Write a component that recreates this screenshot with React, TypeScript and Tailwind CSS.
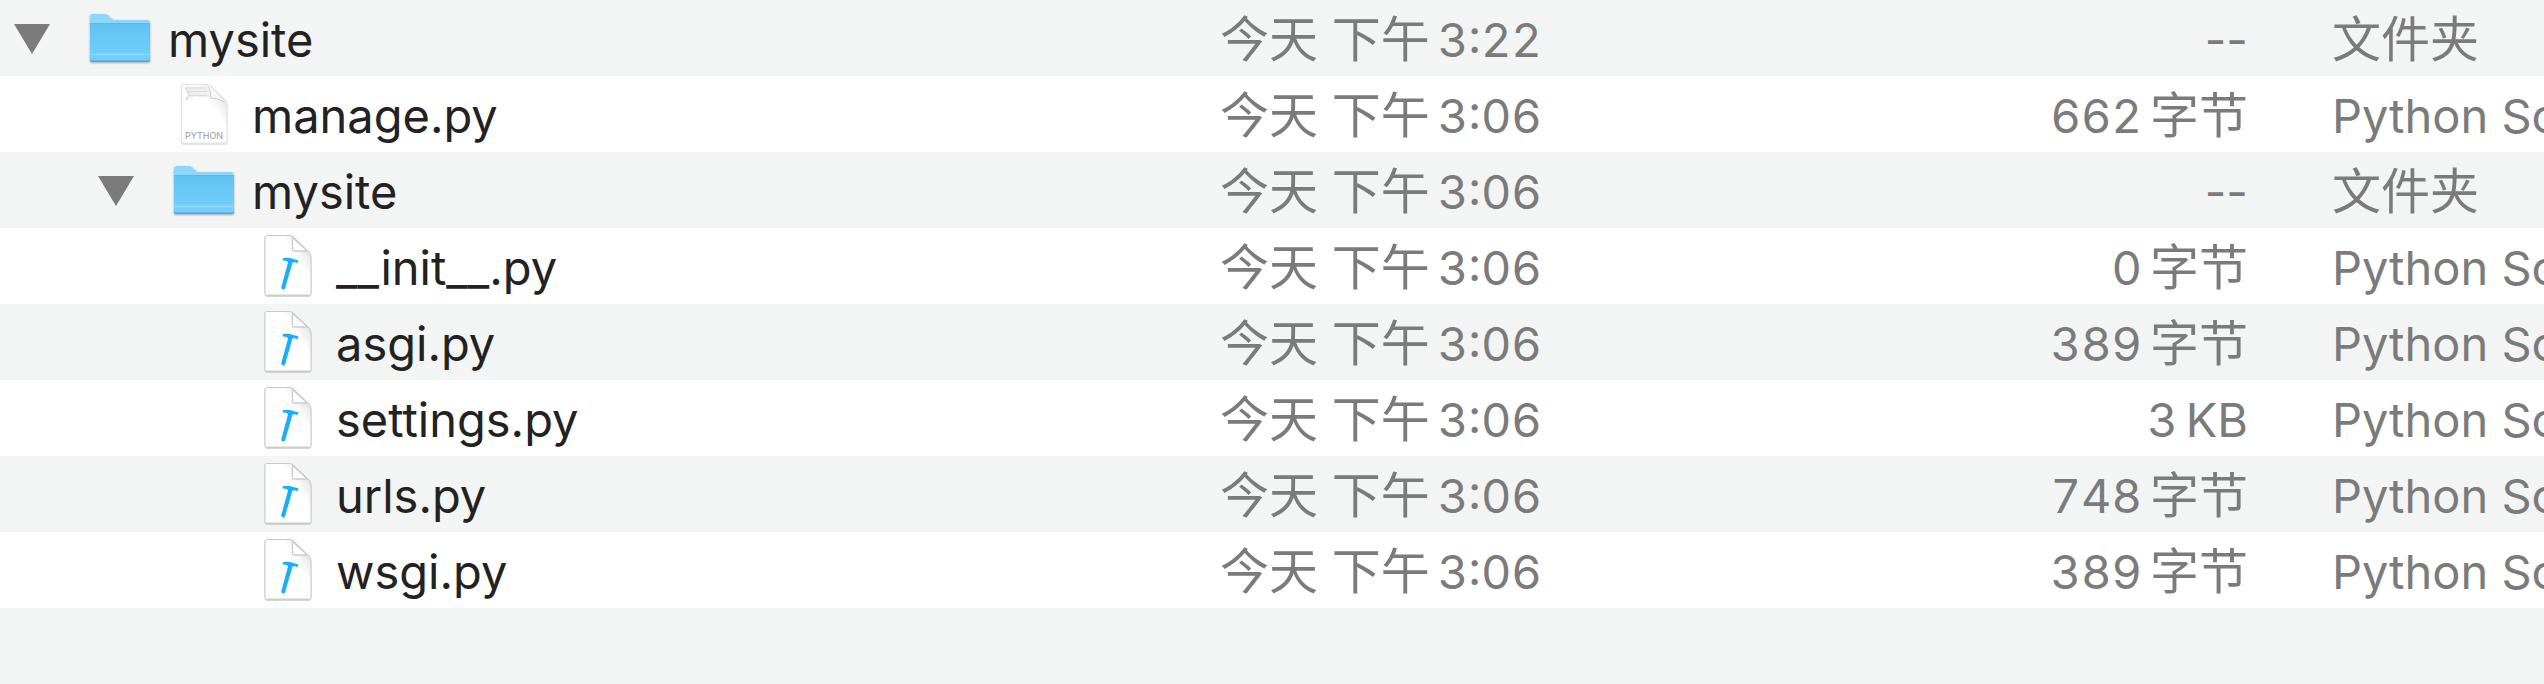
import React from "react";

type Kind = "folder" | "python" | "script";

interface Entry {
  name: string;
  depth: number;
  kind: Kind;
  time: string;
  size?: { value: string; unit: string };
}

const bytes = (value: string) => ({ value, unit: "字节" });

const entries: Entry[] = [
  { name: "mysite", depth: 0, kind: "folder", time: "3:22" },
  { name: "manage.py", depth: 1, kind: "python", time: "3:06", size: bytes("662") },
  { name: "mysite", depth: 1, kind: "folder", time: "3:06" },
  { name: "__init__.py", depth: 2, kind: "script", time: "3:06", size: bytes("0") },
  { name: "asgi.py", depth: 2, kind: "script", time: "3:06", size: bytes("389") },
  { name: "settings.py", depth: 2, kind: "script", time: "3:06", size: { value: "3", unit: "KB" } },
  { name: "urls.py", depth: 2, kind: "script", time: "3:06", size: bytes("748") },
  { name: "wsgi.py", depth: 2, kind: "script", time: "3:06", size: bytes("389") },
];

const indents = ["pl-3", "pl-24", "pl-[180px]"];

function FolderIcon() {
  return (
    <svg viewBox="0 0 64 64" className="size-16 shrink-0" aria-hidden="true">
      <defs>
        <linearGradient id="folder-front" x1="0" y1="0" x2="0" y2="1">
          <stop offset="0" stopColor="#61c3f2" />
          <stop offset="1" stopColor="#74d0fc" />
        </linearGradient>
        <filter id="folder-shadow" x="-10%" y="-10%" width="120%" height="125%">
          <feDropShadow dx="0" dy="1" stdDeviation="0.9" floodColor="#000" floodOpacity="0.32" />
        </filter>
      </defs>
      <g filter="url(#folder-shadow)">
        <path d="M2 11q0-3 3-3h12q2 0 3.500 1.500l3 3q1.500 1.500 3.500 1.500h32q3 0 3 3v36.500q0 2.500-2.500 2.500h-55Q2 56 2 53.500z" fill="#8ad7fb" />
        <path d="M2 18h60v35.500q0 2.500-2.500 2.500h-55Q2 56 2 53.500z" fill="url(#folder-front)" />
        <path d="M2 17.500h60" stroke="#5bb9e6" strokeWidth="1" />
        <path d="M2 48.500h60" stroke="#8bd9ff" strokeWidth="1.500" />
        <path d="M2 53v.5Q2 56 4.500 56h55q2.500 0 2.500-2.500V53q-.7 1.500-2.500 1.500h-55Q2.700 54.500 2 53z" fill="#4ba6d3" />
      </g>
    </svg>
  );
}

function PythonIcon() {
  return (
    <svg viewBox="0 0 64 64" className="size-16 shrink-0" aria-hidden="true">
      <defs>
        <filter id="python-shadow" x="-10%" y="-10%" width="120%" height="120%">
          <feDropShadow dx="0" dy="1" stdDeviation="0.6" floodColor="#000" floodOpacity="0.18" />
        </filter>
        <filter id="python-soft">
          <feGaussianBlur stdDeviation="0.7" />
        </filter>
        <linearGradient id="python-shade" x1="0.9" y1="0.15" x2="0.5" y2="0.5">
          <stop offset="0.1" stopColor="#e9e9e9" />
          <stop offset="0.6" stopColor="#fff" />
        </linearGradient>
      </defs>
      <path
        d="M10.500 2.500h24q2.500 0 4.500 2l14 13.500q2 2.500 2 5v37q0 1-1 1h-43q-1.500 0-1.500-1V3.500q0-1 1-1z"
        fill="url(#python-shade)"
        stroke="#e2e2e2"
        strokeWidth="1.200"
        filter="url(#python-shadow)"
      />
      <g filter="url(#python-soft)">
        <path d="M12.500 4.500h23l3 6-1 5q-8 0-14-1-5 1-9 4l-1-2 3-3z" fill="#efefef" />
        <path d="M14 6h19M15 9.500h20M17 13.500h18" stroke="#dcdcdc" strokeWidth="1" />
        <path d="M13.500 6l3.500 6-3 6" stroke="#d0d0d0" strokeWidth="1" fill="none" />
        <path d="M36 4q4 7 2.500 12 7-1 14 4L38 4.500z" fill="#f8f8f8" />
        <path d="M36 4.500q4 6 2.500 11.500 7-.5 14 4" stroke="#cccccc" strokeWidth="1" fill="none" />
      </g>
      <text x="32" y="57" textAnchor="middle" className="fill-[#9a9a9a] font-[Inter] text-[9px]">PYTHON</text>
    </svg>
  );
}

function ScriptIcon() {
  return (
    <svg viewBox="0 0 64 64" className="size-16 shrink-0" aria-hidden="true">
      <defs>
        <filter id="script-shadow" x="-10%" y="-10%" width="120%" height="120%">
          <feDropShadow dx="0" dy="1" stdDeviation="0.6" floodColor="#000" floodOpacity="0.3" />
        </filter>
        <linearGradient id="script-shade" x1="0.9" y1="0.1" x2="0.5" y2="0.45">
          <stop offset="0.1" stopColor="#e4e4e4" />
          <stop offset="0.65" stopColor="#fff" />
        </linearGradient>
      </defs>
      <path
        d="M10.500 1.500h23q2.500 0 4.500 2l15 14.500q2 2 2 5v36.500q0 1.500-1.500 1.500h-43Q9 61 9 59.500V3q0-1.500 1.500-1.500z"
        fill="url(#script-shade)"
        stroke="#cacaca"
        strokeWidth="1"
        filter="url(#script-shadow)"
      />
      <path d="M36.500 3.500v12q0 1.500 1.500 1.500h13.500z" fill="#fff" stroke="#cccccc" strokeWidth="1.300" />
      <path
        d="M26.800 24q5-.8 9.200.5 2 1 4 1.200l2.300.3-1 3.600-2.200-1.300-2.600.2L29 54.500q-.7 1.300-2.300.8-1.900-.6-1.400-2.300L32 28.500q-.8-1.500-2.200-1.700l-3-.3z"
        fill="#1badf8"
      />
    </svg>
  );
}

function EntryIcon({ kind }: { kind: Kind }) {
  if (kind === "folder") return <FolderIcon />;
  return kind === "python" ? <PythonIcon /> : <ScriptIcon />;
}

export default function App() {
  return (
    <main className="overflow-hidden bg-white font-[Inter,'Noto_Sans_CJK_SC',sans-serif] text-[47px] leading-[72px] text-[#7b7b7b]">
      <table className="w-full table-fixed border-collapse whitespace-nowrap">
        <colgroup>
          <col />
          <col className="w-[598px]" />
          <col className="w-[430px]" />
          <col className="w-[296px]" />
        </colgroup>
        <tbody>
          {entries.map((entry, i) => (
            <tr key={i} className="h-[76px] odd:bg-[#f3f5f4]">
              <td className="p-0">
                <div className={`flex h-[76px] items-center ${indents[entry.depth]}`}>
                  <div className="flex w-[76px] shrink-0 items-center pt-0.5">
                    {entry.kind === "folder" && (
                      <button type="button" aria-label="mysite" aria-expanded="true" className="flex">
                        <svg viewBox="0 0 40 30" className="h-[30px] w-10" aria-hidden="true">
                          <path d="M2 0h36L20 30z" fill="#7b7b7b" />
                        </svg>
                      </button>
                    )}
                  </div>
                  <EntryIcon kind={entry.kind} />
                  <span className="pt-1 pl-4 text-[#222222]">{entry.name}</span>
                </div>
              </td>
              <td className="p-0">
                <div className="flex h-[76px] items-center gap-2 pt-1">
                  <span className="text-[49px]">今天 下午</span>
                  <span className="tabular-nums">{entry.time}</span>
                </div>
              </td>
              <td className="p-0">
                <div className="flex h-[76px] items-center justify-end gap-2 pt-1">
                  {entry.size ? (
                    <>
                      <span className="tabular-nums">{entry.size.value}</span>
                      <span className={entry.size.unit === "KB" ? "" : "text-[49px]"}>{entry.size.unit}</span>
                    </>
                  ) : (
                    <span>--</span>
                  )}
                </div>
              </td>
              <td className="overflow-hidden p-0 pl-[84px]">
                <div className="flex h-[76px] items-center pt-1">
                  {entry.kind === "folder" ? <span className="text-[49px]">文件夹</span> : <span>Python Script</span>}
                </div>
              </td>
            </tr>
          ))}
          <tr className="h-[76px] bg-[#f3f5f4]">
            <td colSpan={4} className="p-0" />
          </tr>
        </tbody>
      </table>
    </main>
  );
}
